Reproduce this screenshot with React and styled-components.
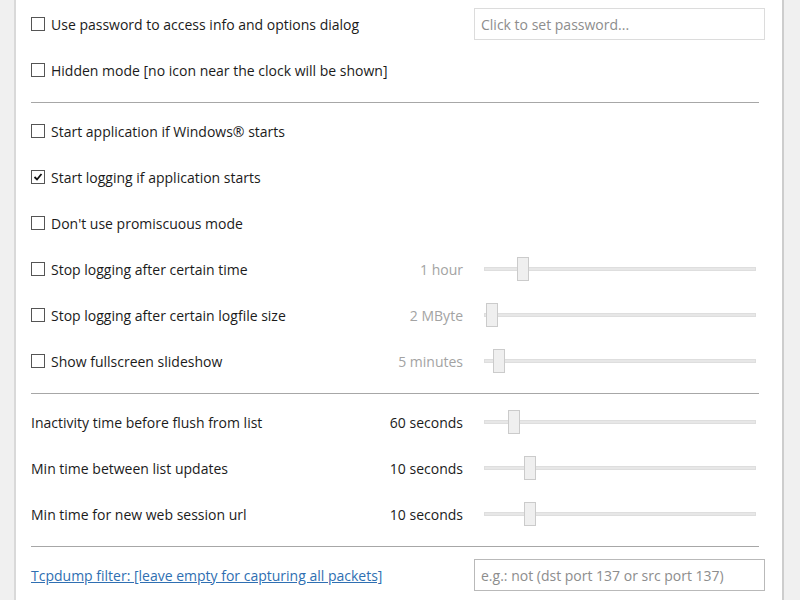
import React from "react";
import styled, { createGlobalStyle } from "styled-components";

const Global = createGlobalStyle`
  html, body { margin: 0; padding: 0; background: #f0f0f0; }
  body { font-family: "Open Sans", "Noto Sans", sans-serif; }
`;

const Frame = styled.div`
  width: 800px;
  height: 600px;
  display: flex;
  background: #f0f0f0;
  overflow: hidden;
`;

const Gutter = styled.div`
  width: ${(p) => p.$w}px;
  flex: none;
  background: #f0f0f0;
`;

const Panel = styled.div`
  width: 770px;
  flex: none;
  background: #fff;
  border-left: 2px solid #d9d9d9;
  border-right: 2px solid #cdcdcd;
  box-sizing: border-box;
  padding: 1px 17px 0 15px;
  display: flex;
  flex-direction: column;
`;

const Row = styled.div`
  height: 46px;
  display: grid;
  grid-template-columns: ${(p) => (p.$input ? "1fr 291px" : p.$slider ? "1fr 100px 302px" : "1fr")};
  align-items: center;
  font-size: 14px;
  color: #1b1b1b;
`;

const Check = styled.label`
  display: flex;
  align-items: center;
  gap: 6px;
  cursor: default;
`;

const Box = styled.span`
  width: 12px;
  height: 12px;
  border: 1px solid #555;
  background: #fff;
  display: flex;
  align-items: center;
  justify-content: center;
  flex: none;
`;

const Label = styled.span`
  white-space: nowrap;
`;

const Value = styled.span`
  text-align: right;
  white-space: nowrap;
  color: ${(p) => (p.$disabled ? "#a3a3a3" : "#1b1b1b")};
`;

const Track = styled.div`
  position: relative;
  height: 4px;
  margin: 0 9px 0 21px;
  background: #e7e7e7;
  border: 1px solid #dedede;
  box-sizing: border-box;
`;

const Thumb = styled.div`
  position: absolute;
  top: -11px;
  width: 12px;
  height: 24px;
  box-sizing: border-box;
  background: #efefef;
  border: 1px solid #cbcbcb;
`;

const Input = styled.div`
  height: 32px;
  box-sizing: border-box;
  border: 1px solid ${(p) => (p.$dark ? "#b9b9b9" : "#dcdcdc")};
  background: #fff;
  color: #8d8d8d;
  font-size: 14px;
  padding: 0 6px;
  display: flex;
  align-items: center;
  white-space: nowrap;
`;

const Sep = styled.div`
  height: 1px;
  background: #a7a7a7;
  margin: 9px 6px 5px 0;
`;

const Link = styled.a`
  color: #2f6fb2;
  text-decoration: underline;
  white-space: nowrap;
`;

function CheckBox({ checked, children }) {
  return (
    <Check>
      <Box>
        {checked && (
          <svg width="10" height="10" viewBox="0 0 10 10">
            <polyline points="1.5,5 4,7.5 8.5,2" fill="none" stroke="#111" strokeWidth="1.8" />
          </svg>
        )}
      </Box>
      <Label>{children}</Label>
    </Check>
  );
}

function Slider({ pos }) {
  return (
    <Track>
      <Thumb style={{ left: pos - 1 }} />
    </Track>
  );
}

const timed = [
  { label: "Stop logging after certain time", value: "1 hour", pos: 33 },
  { label: "Stop logging after certain logfile size", value: "2 MByte", pos: 2 },
  { label: "Show fullscreen slideshow", value: "5 minutes", pos: 9 },
];

const rates = [
  { label: "Inactivity time before flush from list", value: "60 seconds", pos: 24 },
  { label: "Min time between list updates", value: "10 seconds", pos: 40 },
  { label: "Min time for new web session url", value: "10 seconds", pos: 40 },
];

export default function App() {
  return (
    <>
      <Global />
      <Frame>
        <Gutter $w={14} />
        <Panel>
          <Row $input>
            <CheckBox>Use password to access info and options dialog</CheckBox>
            <Input>Click to set password...</Input>
          </Row>
          <Row>
            <CheckBox>Hidden mode [no icon near the clock will be shown]</CheckBox>
          </Row>
          <Sep />
          <Row>
            <CheckBox>Start application if Windows® starts</CheckBox>
          </Row>
          <Row>
            <CheckBox checked>Start logging if application starts</CheckBox>
          </Row>
          <Row>
            <CheckBox>Don't use promiscuous mode</CheckBox>
          </Row>
          {timed.map((t) => (
            <Row $slider key={t.label}>
              <CheckBox>{t.label}</CheckBox>
              <Value $disabled>{t.value}</Value>
              <Slider pos={t.pos} />
            </Row>
          ))}
          <Sep />
          {rates.map((t, i) => (
            <Row $slider key={i}>
              <Label>{t.label}</Label>
              <Value>{t.value}</Value>
              <Slider pos={t.pos} />
            </Row>
          ))}
          <Sep />
          <Row $input>
            <Label>
              <Link>Tcpdump filter: [leave empty for capturing all packets]</Link>
            </Label>
            <Input $dark>e.g.: not (dst port 137 or src port 137)</Input>
          </Row>
        </Panel>
        <Gutter $w={16} />
      </Frame>
    </>
  );
}
